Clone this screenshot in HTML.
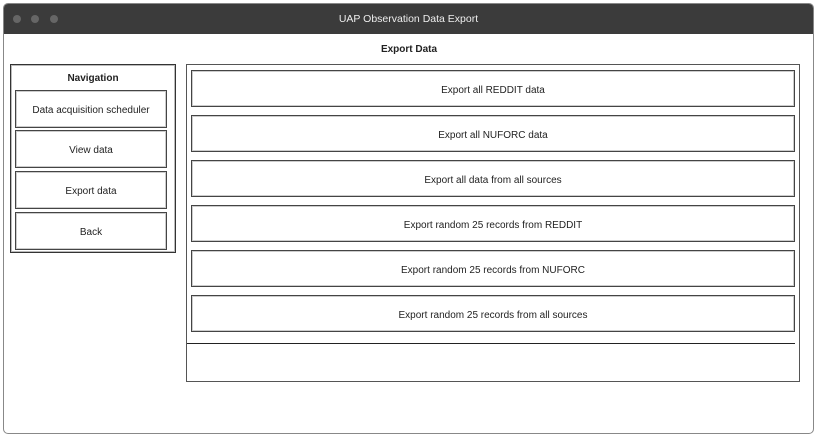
<!DOCTYPE html><html><head><style>
body{margin:0;width:818px;height:438px;background:#fff;font-family:"Liberation Sans",sans-serif;font-size:10px;color:#222;position:relative;overflow:hidden}
.a{position:absolute;box-sizing:border-box}
.win{left:3px;top:3px;width:811px;height:431px;border:1px solid #888;border-radius:5px;overflow:hidden}
.tb{left:0;top:0;width:100%;height:30px;background:#3b3b3b;color:#eee;text-align:center;line-height:30px;font-size:10.5px}
.dot{top:11px;width:8px;height:8px;border-radius:50%;background:#666}
.b{border:1px solid #444;box-shadow:inset 0 0 0 1px #ccc;text-align:center;display:flex;align-items:center;justify-content:center;padding-top:3px}
</style></head><body>
<div class="a win">
<div class="a tb">UAP Observation Data Export</div>
<div class="a dot" style="left:9px"></div><div class="a dot" style="left:27px"></div><div class="a dot" style="left:46px"></div>
</div>
<div class="a" style="left:0;top:44px;width:818px;text-align:center;font-weight:bold">Export Data</div>
<div class="a" style="left:10px;top:64px;width:166px;height:189px;border:1px solid #333;box-shadow:inset 0 0 0 1px #bbb"></div>
<div class="a" style="left:10px;top:73px;width:166px;text-align:center;font-weight:bold">Navigation</div>
<div class="a b" style="left:15px;top:90px;width:152px;height:38px">Data acquisition scheduler</div>
<div class="a b" style="left:15px;top:130px;width:152px;height:38px">View data</div>
<div class="a b" style="left:15px;top:171px;width:152px;height:38px">Export data</div>
<div class="a b" style="left:15px;top:212px;width:152px;height:38px">Back</div>
<div class="a" style="left:186px;top:64px;width:614px;height:318px;border:1px solid #555"></div>
<div class="a b" style="left:191px;top:70px;width:604px;height:37px">Export all REDDIT data</div>
<div class="a b" style="left:191px;top:115px;width:604px;height:37px">Export all NUFORC data</div>
<div class="a b" style="left:191px;top:160px;width:604px;height:37px">Export all data from all sources</div>
<div class="a b" style="left:191px;top:205px;width:604px;height:37px">Export random 25 records from REDDIT</div>
<div class="a b" style="left:191px;top:250px;width:604px;height:37px">Export random 25 records from NUFORC</div>
<div class="a b" style="left:191px;top:295px;width:604px;height:37px">Export random 25 records from all sources</div>
<div class="a" style="left:187px;top:343px;width:608px;height:1px;background:#222"></div>
</body></html>
